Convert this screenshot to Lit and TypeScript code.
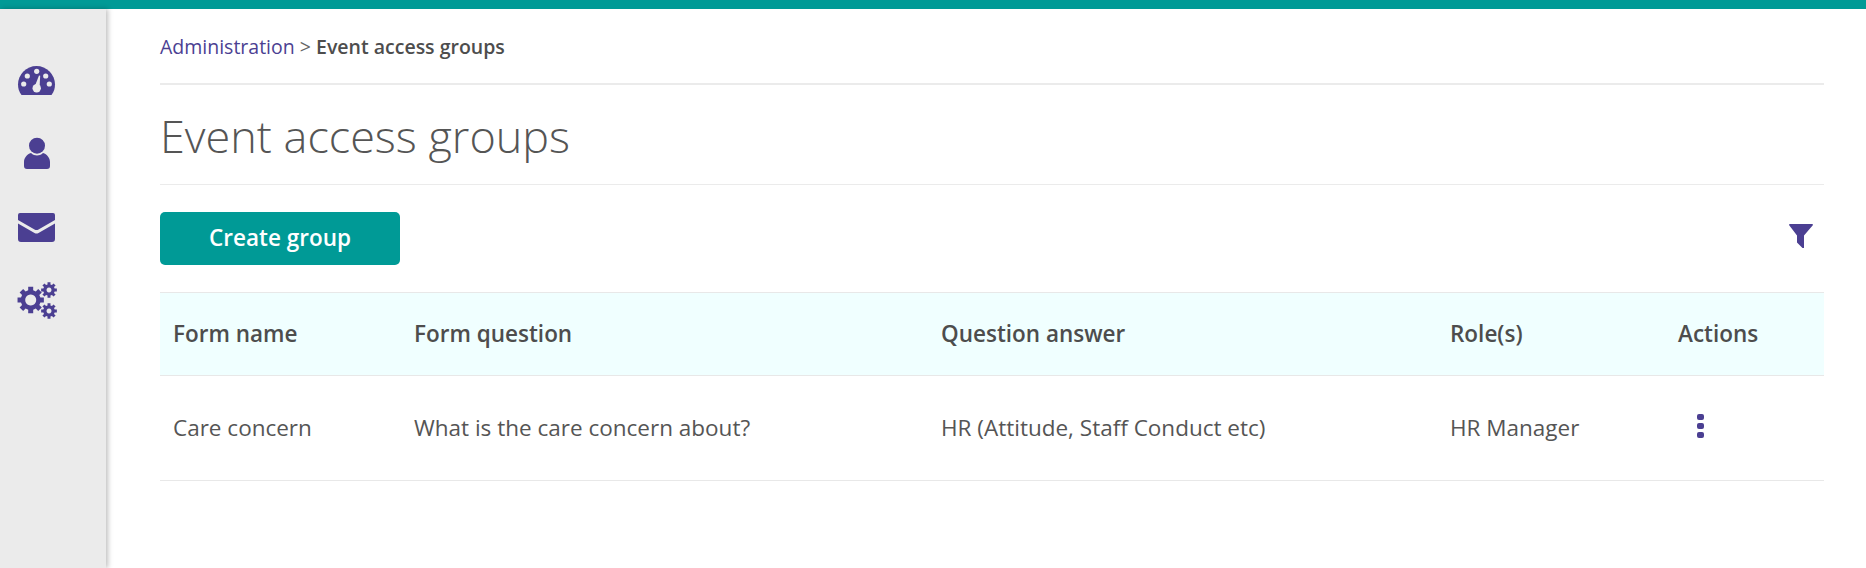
import { LitElement, html, css, svg } from 'lit';
import { customElement } from 'lit/decorators.js';

// builds a cog outline around cx,cy
function gear(cx: number, cy: number, outer: number, inner: number, teeth: number) {
  const pts: string[] = [];
  const step = (Math.PI * 2) / teeth;
  for (let i = 0; i < teeth; i++) {
    const a = i * step - Math.PI / 2;
    const list: [number, number][] = [
      [inner, a - step * 0.32],
      [outer, a - step * 0.24],
      [outer, a + step * 0.24],
      [inner, a + step * 0.32],
    ];
    for (const [r, t] of list) {
      pts.push(`${(cx + r * Math.cos(t)).toFixed(2)} ${(cy + r * Math.sin(t)).toFixed(2)}`);
    }
  }
  return `M${pts.join('L')}Z`;
}

const rows = [
  {
    name: 'Care concern',
    question: 'What is the care concern about?',
    answer: 'HR (Attitude, Staff Conduct etc)',
    role: 'HR Manager',
  },
];

@customElement('app-root')
export class AppRoot extends LitElement {
  static styles = css`
    :host {
      display: block;
      height: 568px;
      overflow: hidden;
      background: #fff;
      font-family: 'Open Sans', 'Liberation Sans', sans-serif;
      color: #4d4d4d;
    }
    .topbar {
      height: 9px;
      background: #009a96;
    }
    .shell {
      display: flex;
      height: 559px;
    }
    .side {
      flex: 0 0 106px;
      background: #ebebeb;
      box-shadow: 2px 0 5px rgba(0, 0, 0, 0.25);
      display: flex;
      flex-direction: column;
      align-items: flex-start;
      gap: 34px;
      padding: 57px 0 0 18px;
      box-sizing: border-box;
    }
    .side svg {
      display: block;
      width: 38px;
      height: 38px;
      fill: #4b3f92;
      overflow: visible;
    }
    main {
      flex: 1;
      padding: 0 42px 0 54px;
      min-width: 0;
    }
    .crumbs {
      height: 76px;
      box-sizing: border-box;
      padding-top: 24px;
      font-size: 19.5px;
      line-height: 28px;
      border-bottom: 2px solid #ebebeb;
      color: #666;
    }
    .crumbs a {
      color: #4b3f92;
      text-decoration: none;
    }
    .crumbs b {
      font-weight: 600;
      color: #4d4d4d;
    }
    h1 {
      margin: 0;
      height: 100px;
      box-sizing: border-box;
      padding-top: 21px;
      font-size: 45px;
      line-height: 60px;
      font-weight: 300;
      color: #555;
      border-bottom: 1px solid #ebebeb;
    }
    .tools {
      display: flex;
      justify-content: space-between;
      align-items: center;
      margin-top: 27px;
      margin-bottom: 27px;
    }
    button {
      width: 240px;
      height: 53px;
      border: 0;
      border-radius: 5px;
      background: #009a96;
      color: #fff;
      font: 600 22.5px 'Open Sans', 'Liberation Sans', sans-serif;
      padding: 0 0 2px;
    }
    .filter {
      width: 24px;
      height: 24px;
      fill: #4b3f92;
      margin: 0 11px 5px 0;
      display: block;
    }
    .row {
      display: grid;
      grid-template-columns: 241px 527px 509px 228px 1fr;
      align-items: center;
      font-size: 22.5px;
      border-bottom: 1px solid #e8e8e8;
      padding-bottom: 2px;
    }
    .row > div {
      padding-left: 13px;
    }
    .head {
      height: 84px;
      box-sizing: border-box;
      background: #f0ffff;
      border-top: 1px solid #e8e8e8;
      font-weight: 600;
    }
    .body {
      height: 105px;
      box-sizing: border-box;
      color: #555;
    }
    .row > .dots {
      display: flex;
      flex-direction: column;
      gap: 3px;
      margin: -2px 0 0 32px;
      width: 7px;
      padding: 0;
    }
    .dots i {
      display: block;
      width: 7px;
      height: 6px;
      border-radius: 2px;
      background: #4b3f92;
    }
  `;

  render() {
    return html`
      <div class="topbar"></div>
      <div class="shell">
        <nav class="side">
          <svg viewBox="0 0 38 38">
            <path d="M3.500 29C1 26 0 22 0 18.500A18.500 18.500 0 0 1 37 18.500C37 22 36 26 33.500 29Z"/>
            <g fill="#ebebeb">
              <circle cx="18.700" cy="5.300" r="2.600"/>
              <circle cx="9.300" cy="10" r="2.600"/>
              <circle cx="27.700" cy="10" r="2.600"/>
              <circle cx="5.700" cy="18" r="2.600"/>
              <circle cx="31.300" cy="18" r="2.600"/>
              <circle cx="18.700" cy="22.300" r="4.200"/>
              <path d="M16.500 21L21 9.500l1.200.3L21.500 22Z"/>
            </g>
          </svg>
          <svg viewBox="0 0 38 38">
            <circle cx="19" cy="7.700" r="8"/>
            <path d="M6 24c0-4 3-8 7-9 2 1.800 4 2.500 6 2.500s4-.7 6-2.500c4 1 7 5 7 9v4q0 3-3 3H9q-3 0-3-3Z"/>
          </svg>
          <svg viewBox="0 0 38 38">
            <path d="M0 5q0-2 2-2h33q2 0 2 2v5L20.500 19.500q-2 1.200-4 0L0 10Z"/>
            <path d="M0 13.500L16.500 23q2 1 4 0L37 13.500V29q0 3-3 3H3q-3 0-3-3Z"/>
          </svg>
          <svg viewBox="0 0 38 38">
            ${svg`
              <path fill-rule="evenodd" d="${gear(12.700, 18, 13.400, 10, 8)}M12.700 12.500a5.500 5.500 0 1 0 .01 0Z"/>
              <path fill-rule="evenodd" d="${gear(31, 8, 8, 5.800, 8)}M31 5.500a2.500 2.500 0 1 0 .01 0Z"/>
              <path fill-rule="evenodd" d="${gear(31, 29, 8, 5.800, 8)}M31 26.500a2.500 2.500 0 1 0 .01 0Z"/>
            `}
          </svg>
        </nav>
        <main>
          <div class="crumbs"><a href="#">Administration</a> &gt; <b>Event access groups</b></div>
          <h1>Event access groups</h1>
          <div class="tools">
            <button>Create group</button>
            <svg class="filter" viewBox="0 0 24 24">
              <path d="M0 1q0-1 1-1h22q1 0 1 1L15 11.500V24h-1.500L8 18.500V11.500Z"/>
            </svg>
          </div>
          <div class="row head">
            <div>Form name</div>
            <div>Form question</div>
            <div>Question answer</div>
            <div>Role(s)</div>
            <div>Actions</div>
          </div>
          ${rows.map(
            (r) => html`
              <div class="row body">
                <div>${r.name}</div>
                <div>${r.question}</div>
                <div>${r.answer}</div>
                <div>${r.role}</div>
                <div class="dots"><i></i><i></i><i></i></div>
              </div>
            `
          )}
        </main>
      </div>
    `;
  }
}
